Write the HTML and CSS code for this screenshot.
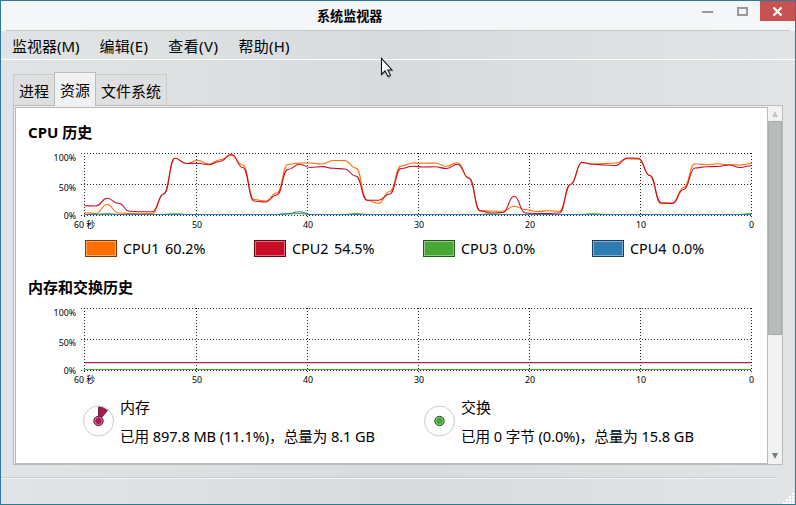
FILE: index.html
```html
<!DOCTYPE html>
<html lang="zh-CN">
<head>
<meta charset="utf-8">
<title>系统监视器</title>
<link rel="stylesheet" href="styles.css">
</head>
<body>
<div class="window">
  <header class="titlebar">
    <h1 class="title">系统监视器</h1>
    <div class="controls">
      <svg class="min" width="35" height="20" shape-rendering="crispEdges"><path d="M12 10h11v2H12z" fill="#999"/></svg>
      <svg class="max" width="35" height="20" shape-rendering="crispEdges"><path d="M13 7h9v7h-9z" fill="none" stroke="#999" stroke-width="2"/></svg>
      <svg class="close" width="35" height="20"><path d="M13.5 6.500l8 8M21.5 6.500l-8 8" stroke="#fff" stroke-width="2.3"/></svg>
    </div>
  </header>
  <nav class="menubar"><span>监视器(M)</span><span class="m2">编辑(E)</span><span class="m3">查看(V)</span><span class="m2">帮助(H)</span></nav>
  <main class="content">
    <div class="tabs"><span class="tab t1">进程</span><span class="tab active">资源</span><span class="tab t3">文件系统</span></div>
    <div class="frame">
      <div class="panel">
        <h2 class="h-cpu">CPU 历史</h2>
        <svg class="chart" id="cpu" width="752" height="84"></svg>
        <div class="legend">
          <div class="item"><i class="swatch orange"></i><span>CPU1</span><b>60.2%</b></div>
          <div class="item"><i class="swatch red"></i><span>CPU2</span><b>54.5%</b></div>
          <div class="item"><i class="swatch green"></i><span>CPU3</span><b>0.0%</b></div>
          <div class="item"><i class="swatch blue"></i><span>CPU4</span><b>0.0%</b></div>
        </div>
        <h2 class="h-mem">内存和交换历史</h2>
        <svg class="chart" id="mem" width="752" height="84"></svg>
        <div class="usage">
          <div class="use">
            <svg width="32" height="32" viewBox="0 0 32 32"><circle cx="16.500" cy="16" r="15" fill="#fff" stroke="#ccc"/><path d="M16.500 16V2Q21 2 25.500 5.500Z" fill="#ab1852" stroke="#5d2138"/><circle cx="16.500" cy="16" r="4.7" fill="#ab1852" stroke="#5d2138"/><circle cx="16.500" cy="16" r="3.7" fill="none" stroke="#d490ae" stroke-width=".8"/></svg>
            <div><p>内存</p><p class="detail">已用 897.8 MB (11.1%)，总量为 8.1 GB</p></div>
          </div>
          <div class="use">
            <svg width="32" height="32" viewBox="0 0 32 32"><circle cx="16.500" cy="16" r="15" fill="#fff" stroke="#ccc"/><circle cx="16.500" cy="16" r="4.7" fill="#49a835" stroke="#27501f"/><circle cx="16.500" cy="16" r="3.7" fill="none" stroke="#a0d095" stroke-width=".8"/></svg>
            <div><p>交换</p><p class="detail">已用 0 字节 (0.0%)，总量为 15.8 GB</p></div>
          </div>
        </div>
      </div>
      <div class="scrollbar">
        <svg width="13" height="13"><path d="M7 3L10 9H4z" fill="#c2c4c5"/></svg>
        <div class="thumb"></div>
        <svg class="down" width="13" height="14"><path d="M4 3H10L7 9z" fill="#777b7d"/></svg>
      </div>
    </div>
  </main>
  <footer class="status"><svg class="grip" width="12" height="12" shape-rendering="crispEdges"><path fill="#fff" d="M9 1h2v2H9zM6 4h2v2H6zM9 4h2v2H9zM3 7h2v2H3zM6 7h2v2H6zM9 7h2v2H9zM0 10h2v2H0zM3 10h2v2H3zM6 10h2v2H6zM9 10h2v2H9z"/></svg></footer>
  <svg class="pointer" width="16" height="24"><path d="M2.5 2.5v17l4-3.5 3 6 3-1.5-3-5.5h5.5z" fill="#999" opacity=".4"/><path d="M2.500 1.500v16l3.500-3.500 3 5.500 2.500-1.300-2.800-5.200h4.300z" fill="#fff" stroke="#111" stroke-width="1.100"/></svg>
</div>
<script src="charts.js"></script>
</body>
</html>
```
FILE: styles.css
```css
* { box-sizing: border-box; }
body { margin: 0; font: 14px/20px "Noto Sans", "Noto Sans CJK SC", sans-serif; color: #000; }
h1, h2, p { margin: 0; }
svg { display: block; flex: none; }
.window { position: relative; width: 796px; height: 505px; border: 1px solid #2f7898; display: flex; flex-direction: column; background: linear-gradient(90deg, #e0e4e6 0, #dee2e2 14%, #d7dbde 50%, #dee2e2 86%, #e0e4e7 100%); }
.titlebar { height: 30px; background: #f5f6f8; display: flex; padding-left: 316px; justify-content: space-between; background-image: linear-gradient(#c8c8c8, #c8c8c8); background-size: 784px 1px; background-position: 5px 29px; background-repeat: no-repeat; }
.title { font-size: 13.1px; font-weight: 700; line-height: 20px; padding-top: 5px; }
.controls { display: flex; }
.close { background: #c75050; }
.menubar { height: 29px; border-bottom: 1px solid #fff; display: flex; gap: 20px; padding: 5px 0 0 11px; font-size: 15px; line-height: 20px; }
.m2 { letter-spacing: .25px; }
.m3 { letter-spacing: .45px; }
.content { padding: 12px 13px 0 12px; height: 417px; }
.tabs { display: flex; align-items: flex-end; height: 33px; line-height: 20px; font-size: 15px; }
.tab { height: 31px; background: #dedfe0; border: 1px solid #cacaca; border-bottom: 0; padding: 6px 5px 0; white-space: nowrap; }
.t1 { width: 41px; border-right: 0; }
.active { height: 34px; background: #f0f1f3; border-color: #bbb; width: 42px; padding-top: 7px; margin-bottom: -1px; z-index: 1; }
.t3 { width: 71px; border-left: 0; }
.frame { width: 770px; height: 360px; border: 1px solid #bbb; padding: 1px 0 0 1px; background: #eceeef; display: flex; }
.panel { width: 753px; height: 357px; border: 1px solid #bbb; background: #fff; }
.scrollbar { width: 14px; height: 357px; background: #f1f3f3; padding-top: 1px; display: flex; flex-direction: column; }
.thumb { height: 214px; background: #b8bcbd; border: 1px solid #aaacad; }
.down { margin-top: auto; }
h2 { font-size: 15px; font-weight: 700; line-height: 20px; padding-left: 12px; height: 20px; }
.h-cpu { margin-top: 14px; }
.chart { margin-top: 6px; overflow: visible; }
.chart text { font-size: 8.8px; fill: #000; }
.legend { display: flex; padding-left: 69px; margin-top: -1px; height: 34px; }
.item { width: 169px; display: flex; height: 20px; margin-top: 7px; align-items: center; white-space: nowrap; font-size: 14.4px; }
.item span { width: 37px; margin: 0 5px 0 6px; }
.item span, .item b { padding-top: 1px; }
.item b { font-weight: 400; }
.swatch { width: 32px; height: 17px; border: 1px solid; box-shadow: inset 0 0 0 1px #ffffff66; }
.orange { background: #ff6e00; border-color: #7f3700; }
.red { background: #cb0c29; border-color: #650614; }
.green { background: #49a835; border-color: #24541a; }
.blue { background: #2d7db3; border-color: #163e59; }
.h-mem { margin-top: 12px; }
.usage { display: flex; padding-left: 66px; height: 64px; margin-top: 4px; }
.use { width: 341px; display: flex; gap: 6px; padding-top: 6px; white-space: nowrap; }
.use svg { margin-top: 8px; }
.use p { height: 29px; line-height: 20px; font-size: 15px; }
.use .detail { font-size: 14.6px; letter-spacing: -.07px; }
.status { height: 27px; background: linear-gradient(#cbcdce 50%, #f2f4f5 50%) 0 0 / 776px 2px no-repeat; display: flex; align-items: flex-end; justify-content: flex-end; }
.pointer { position: absolute; left: 378px; top: 56px; }
```
FILE: charts.js
```js
const cpu1 = [212.7,213.5,204.5,213,213.5,213.7,213.5,194,158.3,163.5,160.3,164,159.7,155.5,165,199.5,201,193,164.5,163,163,164,160.5,160.5,168,200,203.5,191.5,166,163,163.2,163,166.3,162.7,178.5,210.5,211.3,211.3,206.2,209.5,211.5,210.8,211.3,184.3,162.5,164,163.5,163,158.7,159.3,175.5,203.7,203,187.5,163.8,164.7,163.8,164.8,165,163.5];
const cpu2 = [205.7,206,198.3,203.3,211.2,211.8,211.8,194,158.3,163.5,163.3,164.7,161.3,154.2,167.5,201,202,195,169.5,164.2,167.5,166.6,168.3,169,176,200.3,200.3,194,168.5,166.3,167,166.8,168.5,164.3,178,211,213,212.5,196.3,213,213.5,213.5,213,184.5,162.5,164.3,165,165.5,158,158.3,175.5,202.7,203.5,189.5,168,166.7,166.5,165,167.5,165.7];
const cpu3 = Array(60).fill(214.5), cpu4 = Array(60).fill(214.5);
cpu3[8] = 213.7; cpu3[18] = 213.9; cpu3[19] = 213.5; cpu3[24] = 213.5; cpu3[36] = 213.8; cpu3[45] = 213.7; cpu3[59] = 213.5;
cpu4[2] = 213.8; cpu4[18] = 213.8; cpu4[19] = 211.7;
const X0 = 68.5, STEP = 667 / 59;
function curve(a, color) {
  let d = `M${X0} ${a[0] - 148}`;
  for (let i = 1; i < a.length; i++) {
    const x = X0 + i * STEP, m = x - STEP / 2;
    d += `C${m} ${a[i - 1] - 148} ${m} ${a[i] - 148} ${x} ${a[i] - 148}`;
  }
  return `<path d="${d}" fill="none" stroke="${color}" stroke-width="1.1"/>`;
}
function grid() {
  let s = '<g stroke="#222" stroke-dasharray="1 2" shape-rendering="crispEdges">';
  [5.5, 36.5, 67.5].forEach(y => s += `<path d="M65 ${y}H736"/>`);
  [68.5, 180.5, 291.5, 402.5, 513.5, 624.5, 735.5].forEach(x => s += `<path d="M${x} 5V71"/>`);
  s += '</g>';
  [['100%', 13], ['50%', 43], ['0%', 71]].forEach(([t, y]) => s += `<text x="60" y="${y}" text-anchor="end">${t}</text>`);
  ['60 秒', '50', '40', '30', '20', '10', '0'].forEach((t, i) => s += `<text x="${[68.5, 181, 292, 403, 514, 625, 735.5][i]}" y="80" text-anchor="middle">${t}</text>`);
  return s;
}
document.getElementById('cpu').innerHTML = grid() + curve(cpu1, '#ff6e00') + curve(cpu2, '#cb0c29') + curve(cpu3, '#49a835') + curve(cpu4, '#2d7db3');
document.getElementById('mem').innerHTML = grid() + '<path d="M68.5 59.7H735" stroke="#ab1852" stroke-width="1.3"/><path d="M68.5 66.500H735" stroke="#49a835"/>';
```
